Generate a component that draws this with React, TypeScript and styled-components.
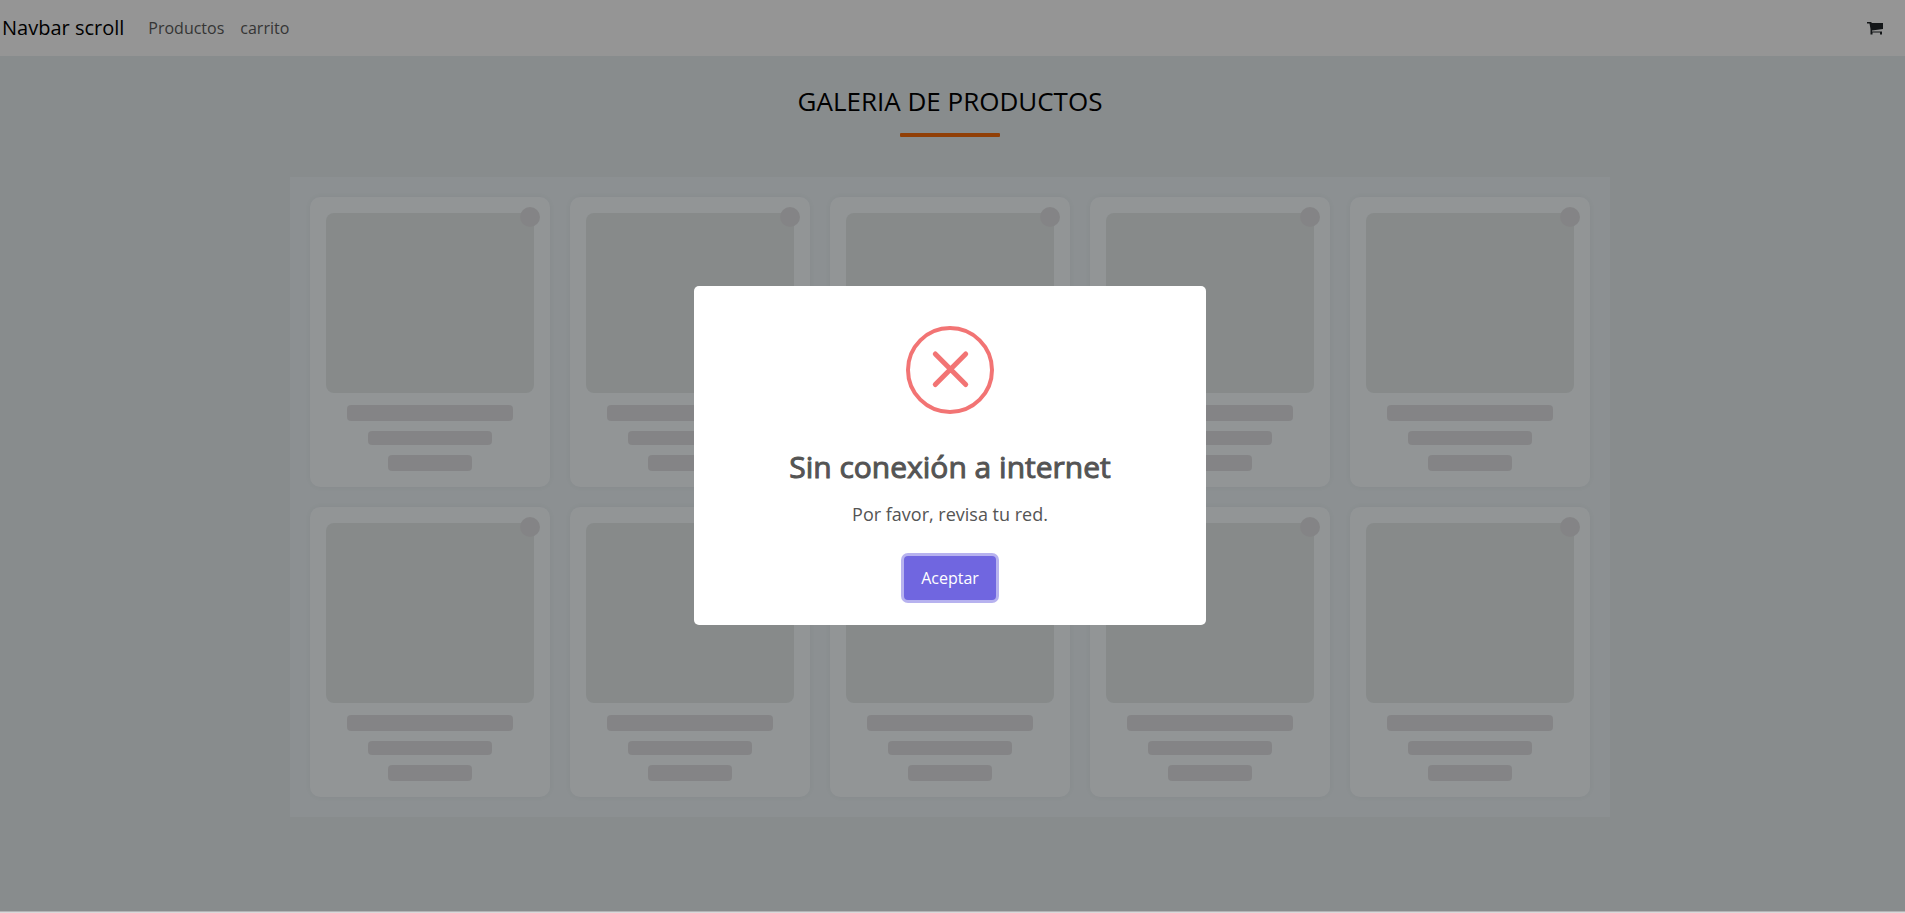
import React from "react";
import styled, { createGlobalStyle } from "styled-components";

const GlobalStyle = createGlobalStyle`
  *, *::before, *::after { box-sizing: border-box; }
  html, body { margin: 0; height: 100%; overflow: hidden; }
  body {
    font-family: "Open Sans", "Noto Sans", sans-serif;
    font-size: 16px;
    line-height: 24px;
    color: #000;
  }
  #root {
    height: 100%;
    padding-bottom: 1px;
    border-bottom: 1px solid #d9d9da;
    background: #b4b4b6;
  }
`;

const Page = styled.div`
  height: 100%;
  padding-right: 5px;
  overflow: hidden;
  background: #e3e9ec;
`;

const Navbar = styled.nav`
  display: flex;
  align-items: center;
  height: 56px;
  margin-right: -5px;
  padding: 0 20px 0 2px;
  background: #f9f9f9;
`;

const Brand = styled.a`
  margin-right: 16px;
  font-size: 20px;
  line-height: 30px;
  color: #000;
  text-decoration: none;
`;

const NavLinks = styled.div`
  display: flex;
  flex: 1;
`;

const NavLink = styled.a`
  padding: 8px;
  color: #595959;
  text-decoration: none;
`;

const CartButton = styled.button`
  display: flex;
  padding: 2px 0 0;
  border: 0;
  background: none;
  color: #212529;
`;

const Heading = styled.h1`
  margin: 28px 0 14px;
  font-size: 26px;
  font-weight: 400;
  line-height: 35px;
  text-align: center;
`;

const Underline = styled.div`
  width: 100px;
  height: 4px;
  margin: 0 auto 40px;
  border-radius: 1px;
  background: #f26a0a;
`;

const Gallery = styled.main`
  display: grid;
  grid-template-columns: repeat(5, 1fr);
  gap: 20px;
  max-width: 1320px;
  margin: 0 auto;
  padding: 20px;
  background: #eaf1f4;
`;

const Card = styled.article`
  position: relative;
  display: flex;
  flex-direction: column;
  align-items: center;
  gap: 10px;
  padding: 16px;
  border-radius: 10px;
  background: #f3f8fb;
  box-shadow: 0 0 8px rgba(0, 0, 0, 0.05);
`;

const Picture = styled.div`
  width: 100%;
  height: 180px;
  margin-bottom: 2px;
  border-radius: 8px;
  background: #e1e7e6;
`;

const Badge = styled.div`
  position: absolute;
  top: 10px;
  right: 10px;
  width: 20px;
  height: 20px;
  border-radius: 50%;
  background: #dddddf;
`;

const Line = styled.div<{ $width: string; $height: number }>`
  width: ${(p) => p.$width};
  height: ${(p) => p.$height}px;
  border-radius: 4px;
  background: #dddddf;
`;

const Backdrop = styled.div`
  position: fixed;
  inset: 0 0 2px;
  display: flex;
  align-items: center;
  justify-content: center;
  padding-right: 5px;
  background: rgba(0, 0, 0, 0.4);
`;

const Modal = styled.div`
  display: flex;
  flex-direction: column;
  align-items: center;
  width: 512px;
  padding-bottom: 25px;
  border-radius: 5px;
  background: #fff;
  color: #545454;
`;

const ErrorIcon = styled.svg`
  width: 88px;
  height: 88px;
  margin: 40px 0 10px;
`;

const ModalTitle = styled.h2`
  margin: 0;
  padding: 20px 16px 0;
  font-size: 30px;
  font-weight: 400;
  line-height: 45px;
  -webkit-text-stroke: 1px currentColor;
`;

const ModalText = styled.p`
  margin: 0;
  padding: 12px 28px 4px;
  font-size: 18px;
  line-height: 27px;
`;

const AcceptButton = styled.button`
  margin-top: 24px;
  padding: 10px 17px;
  border: 0;
  border-radius: 4px;
  background: #7066e0;
  box-shadow: 0 0 0 3px rgba(112, 102, 224, 0.5);
  color: #fff;
  font: 400 16px/24px "Open Sans", "Noto Sans", sans-serif;
`;

const cards = Array.from({ length: 10 }, (_, i) => i);

export default function App() {
  return (
    <>
      <GlobalStyle />
      <Page>
        <Navbar>
          <Brand href="#">Navbar scroll</Brand>
          <NavLinks>
            <NavLink href="#productos">Productos</NavLink>
            <NavLink href="#carrito">carrito</NavLink>
          </NavLinks>
          <CartButton aria-label="Carrito">
            <svg width="18" height="16" viewBox="0 0 18 16" fill="currentColor">
              <path d="M0 1h4l1 1h11v6l-11 1.5v1H15v3h-2v-2H5.500v2H3.500V8L2.500 2.500H0z" />
            </svg>
          </CartButton>
        </Navbar>
        <Heading>GALERIA DE PRODUCTOS</Heading>
        <Underline />
        <Gallery>
          {cards.map((id) => (
            <Card key={id}>
              <Picture />
              <Badge />
              <Line $width="80%" $height={16} />
              <Line $width="60%" $height={14} />
              <Line $width="40%" $height={16} />
            </Card>
          ))}
        </Gallery>
      </Page>
      <Backdrop>
        <Modal role="dialog" aria-modal="true" aria-labelledby="modal-title">
          <ErrorIcon viewBox="0 0 88 88" fill="none" stroke="#f27474" aria-hidden="true">
            <circle cx="44" cy="44" r="42" strokeWidth="4" />
            <path d="M29.300 28 59.700 58.600M59.700 28 29.300 58.600" strokeWidth="5" strokeLinecap="round" />
          </ErrorIcon>
          <ModalTitle id="modal-title">Sin conexión a internet</ModalTitle>
          <ModalText>Por favor, revisa tu red.</ModalText>
          <AcceptButton>Aceptar</AcceptButton>
        </Modal>
      </Backdrop>
    </>
  );
}
